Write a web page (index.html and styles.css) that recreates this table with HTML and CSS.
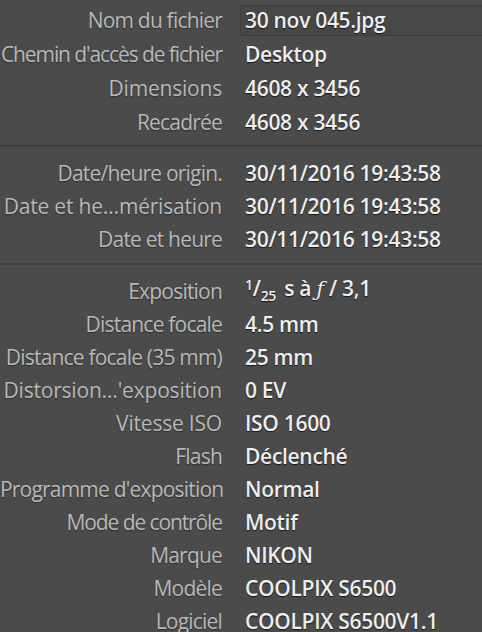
FILE: index.html
```html
<!DOCTYPE html>
<html lang="fr">
<head>
    <meta charset="UTF-8">
    <title>Métadonnées</title>
    <link rel="stylesheet" href="styles.css">
</head>
<body>

    <div class="panel">
        <!-- Fichier -->
        <section class="groupe groupe-fichier">
            <div class="ligne">
                <span class="nom">Nom du fichier</span>
                <span class="valeur champ">30 nov 045.jpg</span>
            </div>
            <div class="ligne">
                <span class="nom serre">Chemin d'accès de fichier</span>
                <span class="valeur">Desktop</span>
            </div>
            <div class="ligne">
                <span class="nom large">Dimensions</span>
                <span class="valeur">4608 x 3456</span>
            </div>
            <div class="ligne">
                <span class="nom">Recadrée</span>
                <span class="valeur">4608 x 3456</span>
            </div>
        </section>

        <!-- Dates -->
        <section class="groupe">
            <div class="ligne">
                <span class="nom">Date/heure origin.</span>
                <span class="valeur">30/11/2016 19:43:58</span>
            </div>
            <div class="ligne">
                <span class="nom large">Date et he…mérisation</span>
                <span class="valeur">30/11/2016 19:43:58</span>
            </div>
            <div class="ligne">
                <span class="nom">Date et heure</span>
                <span class="valeur">30/11/2016 19:43:58</span>
            </div>
        </section>

        <!-- Prise de vue -->
        <section class="groupe">
            <div class="ligne">
                <span class="nom">Exposition</span>
                <span class="valeur"><span class="frac-haut">1</span>/<span class="frac-bas">25</span> s à <i class="f">ƒ</i> / 3,1</span>
            </div>
            <div class="ligne">
                <span class="nom">Distance focale</span>
                <span class="valeur">4.5 mm</span>
            </div>
            <div class="ligne">
                <span class="nom">Distance focale (35 mm)</span>
                <span class="valeur">25 mm</span>
            </div>
            <div class="ligne">
                <span class="nom large">Distorsion…'exposition</span>
                <span class="valeur">0 EV</span>
            </div>
            <div class="ligne">
                <span class="nom large">Vitesse ISO</span>
                <span class="valeur">ISO 1600</span>
            </div>
            <div class="ligne">
                <span class="nom">Flash</span>
                <span class="valeur">Déclenché</span>
            </div>
            <div class="ligne">
                <span class="nom">Programme d'exposition</span>
                <span class="valeur">Normal</span>
            </div>
            <div class="ligne">
                <span class="nom serre">Mode de contrôle</span>
                <span class="valeur">Motif</span>
            </div>
            <div class="ligne">
                <span class="nom">Marque</span>
                <span class="valeur">NIKON</span>
            </div>
            <div class="ligne">
                <span class="nom">Modèle</span>
                <span class="valeur">COOLPIX S6500</span>
            </div>
            <div class="ligne">
                <span class="nom">Logiciel</span>
                <span class="valeur">COOLPIX S6500V1.1</span>
            </div>
        </section>
    </div>

</body>
</html>
```

FILE: styles.css
```css
/* Panneau général */
body {
    margin: 0;
    background: #4b4b4b;
    font-family: 'Open Sans', sans-serif;
    font-size: 21px;
    line-height: 22px;
    overflow: hidden;
}

.panel {
    width: 482px;
    height: 632px;
    background: #4b4b4b;
}

/* Groupes séparés par un trait */
.groupe {
    padding: 9px 0 8px;
    border-top: 2px solid #3e3e3e;
}
.groupe-fichier {
    padding: 3px 0 6px;
    border-top: none;
}
.groupe-fichier .ligne {
    height: 34px;
}

/* Lignes nom / valeur */
.ligne {
    display: grid;
    grid-template-columns: 222px 1fr;
    column-gap: 20px;
    align-items: center;
    height: 33px;
}

.nom {
    text-align: right;
    color: #b8b8b8;
    letter-spacing: -0.8px;
    white-space: nowrap;
    text-shadow: 0 1px 1px rgba(0,0,0,0.4);
}
.nom.serre {
    letter-spacing: -1.1px;
}
.nom.large {
    letter-spacing: -0.2px;
}

.valeur {
    padding-left: 3px;
    color: #eeeeee;
    font-weight: 600;
    letter-spacing: -0.3px;
    white-space: nowrap;
    text-shadow: 0 1px 1px rgba(0,0,0,0.7);
}

/* Champ du nom de fichier */
.champ {
    height: 31px;
    line-height: 29px;
    box-sizing: border-box;
    margin-left: -2px;
    padding-left: 4px;
    border: 1px solid #3c3c3c;
    border-right: none;
    background: #474747;
}

/* Fraction de l'exposition */
.frac-haut {
    font-size: 14px;
    vertical-align: 6px;
}
.frac-bas {
    font-size: 14px;
    vertical-align: -5px;
    margin-right: 3px;
}
.f {
    font-family: 'DejaVu Serif', serif;
    font-weight: 400;
}
```
